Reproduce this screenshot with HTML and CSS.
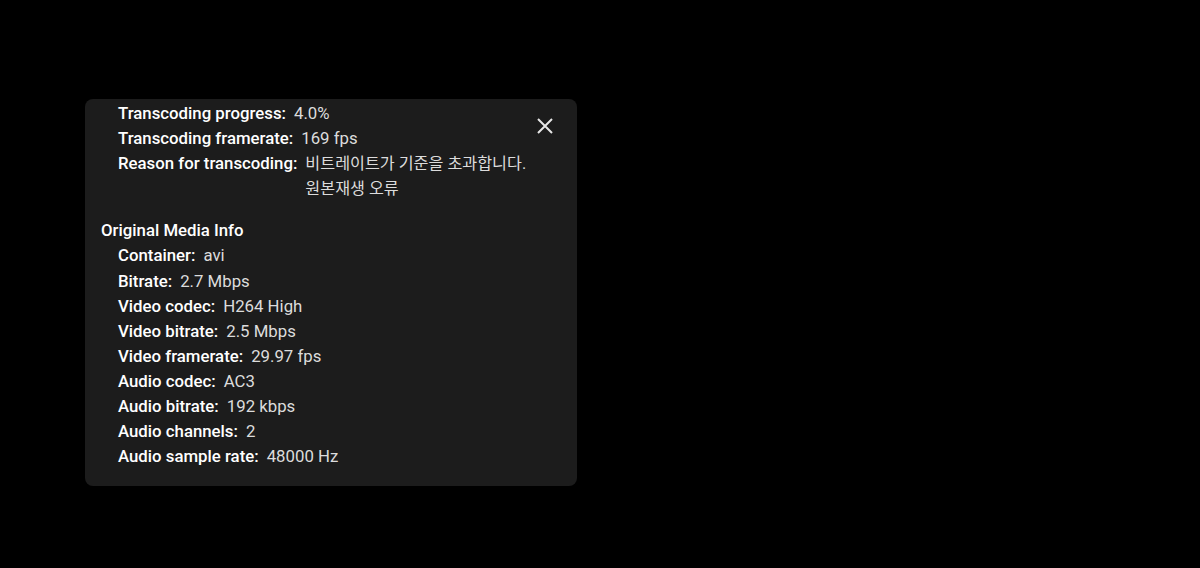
FILE: index.html
```html
<!DOCTYPE html>
<html lang="en">

<head>
    <meta charset="UTF-8">
    <meta name="viewport" content="width=device-width, initial-scale=1.0">
    <title>Playback Info</title>
    <link rel="stylesheet" href="styles.css">
</head>

<body>
    <div class="panel">
        <button class="close" aria-label="Close">
            <svg viewBox="0 0 24 24" width="24" height="24">
                <path d="M5 5L19 19M19 5L5 19" stroke="#e6e6e6" stroke-width="2" fill="none" />
            </svg>
        </button>

        <div class="section">
            <div class="row"><span class="label">Transcoding progress:</span><span class="value">4.0%</span></div>
            <div class="row"><span class="label">Transcoding framerate:</span><span class="value">169 fps</span></div>
            <div class="row"><span class="label">Reason for transcoding:</span><span class="value ko">비트레이트가 기준을 초과합니다.<br>원본재생 오류</span></div>
        </div>

        <div class="section">
            <h2>Original Media Info</h2>
            <div class="row"><span class="label">Container:</span><span class="value">avi</span></div>
            <div class="row"><span class="label">Bitrate:</span><span class="value">2.7 Mbps</span></div>
            <div class="row"><span class="label">Video codec:</span><span class="value">H264 High</span></div>
            <div class="row"><span class="label">Video bitrate:</span><span class="value">2.5 Mbps</span></div>
            <div class="row"><span class="label">Video framerate:</span><span class="value">29.97 fps</span></div>
            <div class="row"><span class="label">Audio codec:</span><span class="value">AC3</span></div>
            <div class="row"><span class="label">Audio bitrate:</span><span class="value">192 kbps</span></div>
            <div class="row"><span class="label">Audio channels:</span><span class="value">2</span></div>
            <div class="row"><span class="label">Audio sample rate:</span><span class="value">48000 Hz</span></div>
        </div>
    </div>
</body>

</html>
```

FILE: styles.css
```css
body {
    margin: 0;
    padding: 0;
    background-color: #000;
    font-family: Roboto, "Noto Sans CJK KR", sans-serif;
    font-size: 16.8px;
    line-height: 25.1px;
    color: #fff;
}

.panel {
    position: relative;
    width: 476px;
    margin: 99px 0 0 85px;
    padding: 2px 0 17px 16px;
    background-color: #1c1c1c;
    border-radius: 8px;
}

.close {
    position: absolute;
    top: 15px;
    right: 20px;
    width: 24px;
    height: 24px;
    padding: 0;
    border: none;
    background: none;
    cursor: pointer;
}

.close svg {
    display: block;
}

.section + .section {
    margin-top: 17px;
}

.section h2 {
    margin: 0;
    font-size: 16.8px;
    font-weight: 500;
}

.row {
    display: flex;
    gap: 8px;
    padding-left: 17px;
}

.label {
    font-weight: 500;
    white-space: nowrap;
}

.value {
    color: #dcdcdc;
}

.value.ko {
    font-size: 16.2px;
}
```
